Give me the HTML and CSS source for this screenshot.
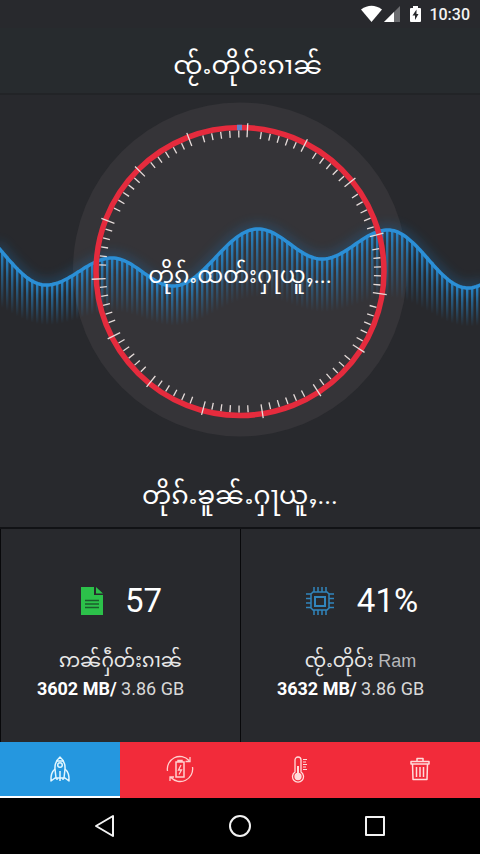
FILE: index.html
```html
<!DOCTYPE html>
<html lang="shn">
<head>
<meta charset="utf-8">
<meta name="viewport" content="width=device-width, initial-scale=1">
<title>ၸႂ်ႉတိုဝ်းၵၢၼ်</title>
<link rel="stylesheet" href="styles.css">
</head>
<body>
<div class="app">
  <div class="status">
    <svg width="60" height="18" viewBox="0 0 60 18" aria-hidden="true">
      <path d="M0 4.500Q10.500-3 21 4.500L10.500 17Z" fill="#fff"/>
      <path d="M39 1V17H23Z" fill="#6c6d70"/>
      <path d="M33 7V17H23Z" fill="#fff"/>
      <path d="M52 1h5v2h2q1 0 1 1v12q0 1-1 1h-9q-1 0-1-1V4q0-1 1-1h2z" fill="#fff"/>
      <path d="M55.500 4.500L51.500 10.500H54V15L57.500 9H55.500Z" fill="#27282c"/>
    </svg>
    <span>10:30</span>
  </div>
  <header class="title"><h1>ၸႂ်ႉတိုဝ်းၵၢၼ်</h1></header>
  <main class="main">
    <section class="dial">
      <svg class="dial-art" viewBox="0 0 480 348" aria-hidden="true">
        <defs>
          <linearGradient id="fade" x1="0" y1="0" x2="0" y2="1">
            <stop offset="0" stop-color="#2689cf" stop-opacity=".95"/>
            <stop offset=".4" stop-color="#2689cf" stop-opacity=".55"/>
            <stop offset="1" stop-color="#2689cf" stop-opacity="0"/>
          </linearGradient>
          <filter id="glow" x="-10%" y="-60%" width="120%" height="220%"><feGaussianBlur stdDeviation="6"/></filter>
        </defs>
        <circle cx="240" cy="174.500" r="167" fill="#353438"/>
        <path id="halo" fill="none" stroke="#1c6fae" stroke-width="9" opacity=".4" filter="url(#glow)"/>
        <g id="bars" fill="url(#fade)"></g>
        <path id="wave" fill="none" stroke="#2b8fd6" stroke-width="3.500"/>
        <circle cx="240" cy="176.500" r="144" fill="none" stroke="#e52b3d" stroke-width="5.500"/>
        <path d="M237 32.500h5" stroke="#5f83c8" stroke-width="5.500"/>
        <g id="ticks" stroke="#e6dcda" stroke-width="1.300"></g>
      </svg>
      <p class="dial-text">တိုၵ်ႉထတ်းႁႃယူႇ...</p>
    </section>
    <p class="scan">တိုၵ်ႉၶူၼ်ႉႁႃယူႇ...</p>
    <section class="stats">
      <div class="stat">
        <div class="stat-top">
          <svg width="22" height="30" viewBox="0 0 22 30" aria-hidden="true">
            <path d="M0 1H13V9H22V29H0Z" fill="#2cc14a"/><path d="M15 1L22 7.500H15Z" fill="#2cc14a"/>
            <path d="M4 14.500H18M4 18H18M4 21.500H18" stroke="#1b5c2c" stroke-width="1.500"/>
          </svg>
          <span class="value">57</span>
        </div>
        <div class="label">ဢၼ်ႁဵတ်းၵၢၼ်</div>
        <div class="usage"><b>3602 MB/</b> 3.86 GB</div>
      </div>
      <div class="stat">
        <div class="stat-top">
          <svg width="30" height="30" viewBox="0 0 30 30" fill="none" stroke="#3185bd" stroke-width="1.500" aria-hidden="true">
            <path d="M8 6H22L24 8V22L22 24H8L6 22V8Z"/><path d="M10 11H20V20H10Z" stroke-width="2"/>
            <path d="M9 1V6M13 1V6M17 1V6M21 1V6M9 24V29M13 24V29M17 24V29M21 24V29M1 8H6M1 12.500H6M1 17H6M1 21.500H6M24 8H29M24 12.500H29M24 17H29M24 21.500H29"/>
          </svg>
          <span class="value">41%</span>
        </div>
        <div class="label">ၸႂ်ႉတိုဝ်း <span>Ram</span></div>
        <div class="usage"><b>3632 MB/</b> 3.86 GB</div>
      </div>
    </section>
  </main>
  <nav class="tabs">
    <button class="tab active" type="button" aria-label="Boost">
      <svg width="28" height="28" viewBox="0 0 28 28" fill="none" stroke="#e3f7ff" stroke-width="1.500" stroke-linejoin="round" aria-hidden="true">
        <path d="M14 2Q8.500 6.500 9 14L10 23H18L19 14Q19.500 6.500 14 2Z"/><path d="M10.500 6H17.500"/><circle cx="14" cy="10" r="2.300"/>
        <path d="M9 14Q4.500 17.500 5 26L9 23H10M19 14Q23.500 17.500 23 26L19 23H18M14 16V26M11 23V25M17 23V25"/>
      </svg>
    </button>
    <button class="tab" type="button" aria-label="Battery">
      <svg width="28" height="28" viewBox="0 0 28 28" fill="none" stroke="#ffd0cf" stroke-width="1.300" aria-hidden="true">
        <path d="M1.500 16A12.500 12.500 0 0 1 23 5.500M26.500 12A12.500 12.500 0 0 1 5 22.500M24 2V6.500H19.500M4 26V22H8"/>
        <path d="M12 7V5.500H16V7M10 7H18V22H10Z" stroke-width="1.500"/><path d="M15 10L12.500 15H15.500L13 19.500"/>
      </svg>
    </button>
    <button class="tab" type="button" aria-label="Temperature">
      <svg width="28" height="28" viewBox="0 0 28 28" fill="none" stroke="#ffdcda" stroke-width="1.300" aria-hidden="true">
        <path d="M9 17V5A3 3 0 0 1 15 5V17A5.500 5.500 0 1 1 9 17Z"/><path d="M12 11V20" stroke-width="2"/><circle cx="12" cy="21.500" r="3" fill="#ffdcda"/>
        <path d="M17 4.500H21M17 7H20M17 9.500H21M17 12H20M17 14.500H21" stroke-width="1"/>
      </svg>
    </button>
    <button class="tab" type="button" aria-label="Clean">
      <svg width="28" height="28" viewBox="0 0 28 28" fill="none" stroke="#ffdcda" stroke-width="1.500" stroke-linejoin="round" aria-hidden="true">
        <path d="M5 6.500H23V9H5ZM11 6V3.500H17V6M6.500 9L7 24.500H21L21.500 9M10.500 12V22M14 12V22M17.500 12V22"/>
      </svg>
    </button>
  </nav>
  <nav class="system">
    <button type="button" aria-label="Back"><svg width="24" height="24" viewBox="0 0 24 24" aria-hidden="true"><path d="M20 2V22L3 12Z"/></svg></button>
    <button type="button" aria-label="Home"><svg width="24" height="24" viewBox="0 0 24 24" aria-hidden="true"><circle cx="12" cy="12" r="10"/></svg></button>
    <button type="button" aria-label="Recent"><svg width="24" height="24" viewBox="0 0 24 24" aria-hidden="true"><path d="M3 3H21V21H3Z"/></svg></button>
  </nav>
</div>
<script src="dial.js"></script>
</body>
</html>
```
FILE: dial.js
```js
const NS = 'http://www.w3.org/2000/svg';
function add(parent, tag, attrs) {
  const el = document.createElementNS(NS, tag);
  for (const key in attrs) el.setAttribute(key, attrs[key]);
  parent.appendChild(el);
}

// Alternating troughs and peaks of the wave, joined by cosine easing.
const extremes = [[-40, 126], [46, 190], [112, 163], [173, 191], [258, 134], [322, 164], [388, 135], [468, 193], [540, 150]];
function waveY(x) {
  let i = 0;
  while (x > extremes[i + 1][0]) i++;
  const [x0, y0] = extremes[i];
  const [x1, y1] = extremes[i + 1];
  return y0 + (y1 - y0) * (1 - Math.cos(Math.PI * (x - x0) / (x1 - x0))) / 2;
}

let d = '';
for (let x = -4; x <= 484; x += 2) d += (d ? 'L' : 'M') + x + ' ' + waveY(x).toFixed(1);
document.getElementById('wave').setAttribute('d', d);
document.getElementById('halo').setAttribute('d', d);

const bars = document.getElementById('bars');
for (let x = 1; x < 480; x += 5) {
  const y = waveY(x);
  add(bars, 'rect', { x: x, y: y, width: 2.4, height: 38 + (194 - y) * 0.5 });
}

// Fifteen long ticks, each followed by five short ones.
const ticks = document.getElementById('ticks');
function tick(angle, y1, y2) {
  add(ticks, 'line', { x1: 240, x2: 240, y1: y1, y2: y2, transform: `rotate(${angle} 240 176.5)` });
}
for (let i = 0; i < 15; i++) {
  const a = 3 + i * 24;
  tick(a, 28, 42);
  for (let j = 0; j < 5; j++) tick(a + 5.7 + j * 3.7, 35.5, 42.5);
}
```
FILE: styles.css
```css
* { box-sizing: border-box; }
body {
  margin: 0;
  background: #28292d;
  color: #fff;
  font-family: Roboto, "Noto Sans Myanmar", "Noto Sans", sans-serif;
}
h1, p { margin: 0; font-weight: 400; }
button { border: 0; padding: 0; background: none; }
svg { display: block; }

.app { min-height: 100vh; display: flex; flex-direction: column; }
.status {
  height: 28px;
  padding: 0 10px;
  display: flex;
  align-items: center;
  justify-content: flex-end;
  gap: 8px;
  font-size: 16px;
  font-weight: 500;
  color: #f2f2f2;
}
.title {
  height: 67px;
  display: flex;
  align-items: center;
  justify-content: center;
  padding: 8px 0 0 16px;
  background: #272b2e;
  border-bottom: 2px solid #222427;
}
.title h1, .scan { font-size: 26px; line-height: 32px; white-space: nowrap; }
.main { flex: 1; display: flex; flex-direction: column; }
.dial { display: grid; place-items: center; }
.dial-art, .dial-text { grid-area: 1 / 1; }
.dial-art { width: 100%; height: auto; }
.dial-text { padding-top: 14px; font-size: 23px; line-height: 32px; white-space: nowrap; }
.scan { padding: 36px 0 16px; text-align: center; }
.stats {
  flex: 1;
  display: grid;
  grid-template-columns: 1fr 1fr;
  border-top: 2px solid #111215;
}
.stat {
  padding-top: 48px;
  border-left: 1px solid #08080a;
  display: flex;
  flex-direction: column;
  align-items: center;
}
.stat-top { display: flex; align-items: center; gap: 22px; height: 48px; padding-left: 2px; }
.value { font-size: 33px; line-height: 48px; }
.label { margin-top: 24px; font-size: 19px; line-height: 24px; color: #e8e8e8; white-space: nowrap; }
.label span { font-family: "Liberation Sans", sans-serif; font-size: 18px; color: #b6b7ba; }
.usage { margin-top: 4px; padding-right: 20px; font-size: 18px; line-height: 24px; color: #d8d8d8; }
.usage b { color: #fff; }
.tabs { display: grid; grid-template-columns: repeat(4, 1fr); height: 56px; background: #f22b3a; }
.tab { display: grid; place-items: center; border-bottom: 2px solid transparent; }
.active { background: #2597df; border-bottom-color: #fff; }
.system { height: 56px; display: flex; justify-content: center; align-items: center; gap: 111px; background: #000; }
.system svg { fill: none; stroke: #f2f2f2; stroke-width: 2; stroke-linejoin: round; }
```
